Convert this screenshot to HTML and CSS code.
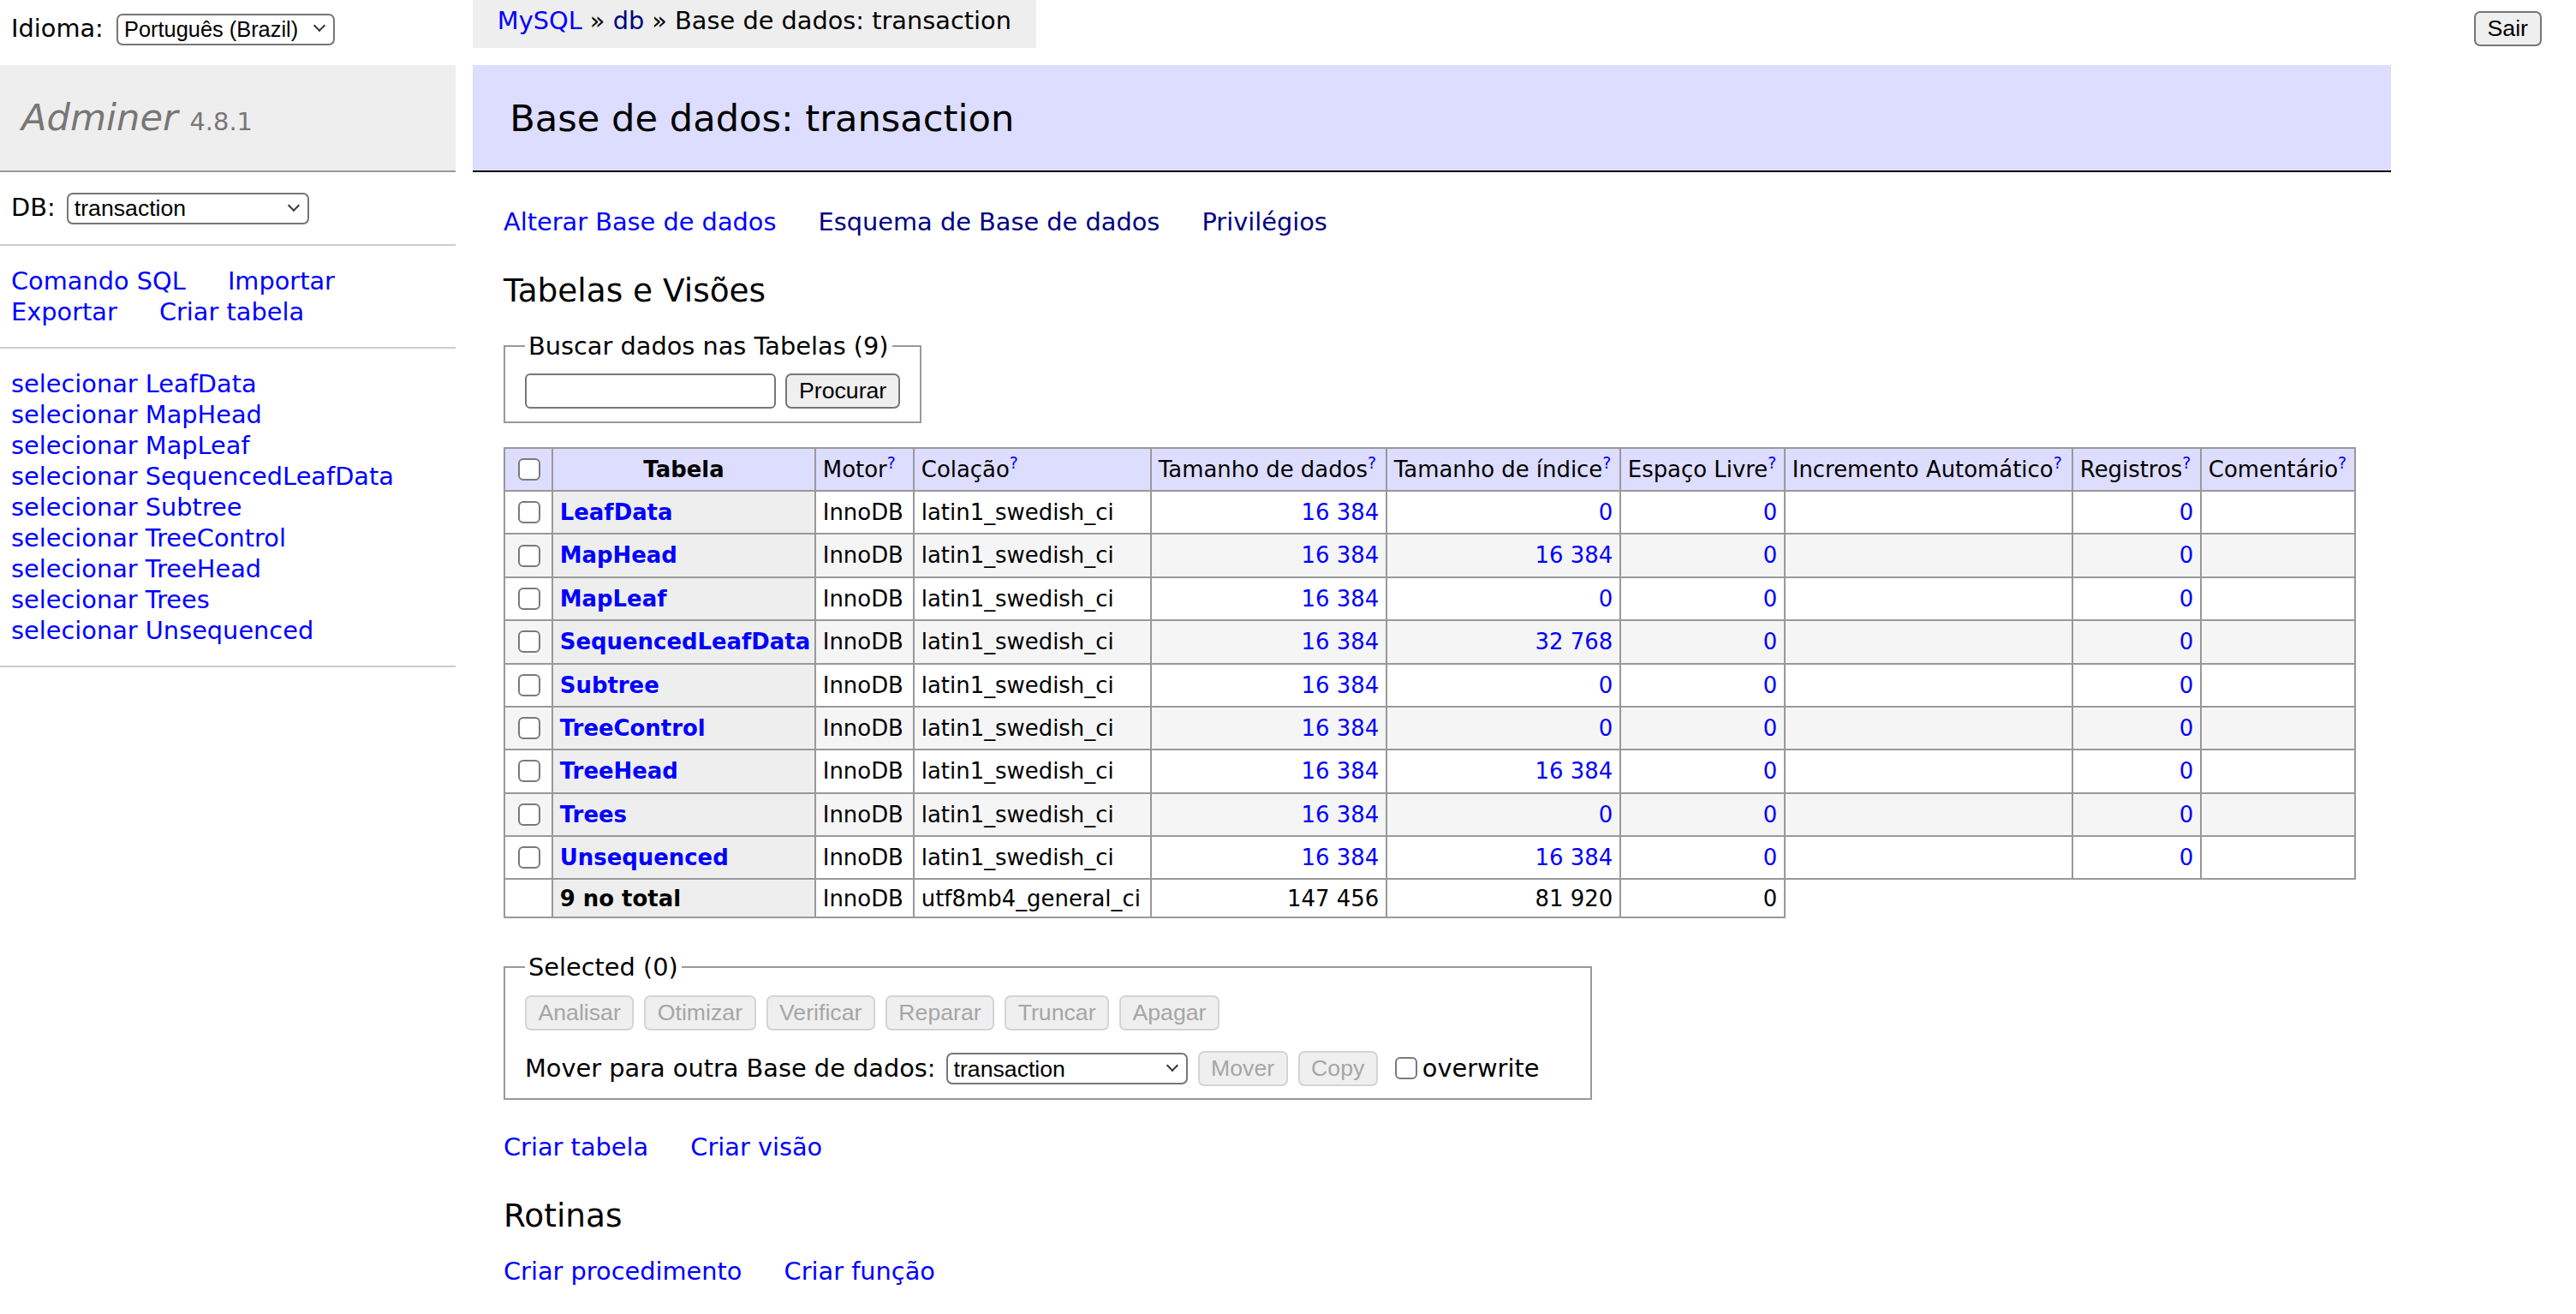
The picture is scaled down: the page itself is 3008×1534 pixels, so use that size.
FILE: index.html
```html
<!DOCTYPE html>
<html lang="pt-BR">
<head>
<meta charset="utf-8">
<title>Base de dados: transaction - Adminer</title>
<link rel="stylesheet" href="styles.css">
</head>
<body>
<header class="topbar">
  <form class="lang">Idioma: <span class="select-wrap"><select class="lang-select"><option>Português (Brazil)</option></select></span></form>
  <p class="breadcrumb"><a href="#">MySQL</a> » <a href="#" class="visited">db</a> » Base de dados: transaction</p>
  <form class="logout"><button type="button" class="btn">Sair</button></form>
</header>
<div class="layout">
  <nav class="menu">
    <h1 class="brand"><a href="#" class="brand-link">Adminer</a> <span class="version">4.8.1</span></h1>
    <form class="menu-block db-block">DB: <span class="select-wrap"><select class="db-select"><option>transaction</option></select></span></form>
    <p class="menu-block links"><a href="#">Comando SQL</a> <a href="#">Importar</a> <a href="#">Exportar</a> <a href="#">Criar tabela</a></p>
    <ul class="menu-block tables">
      <li><a href="#">selecionar</a> <a href="#">LeafData</a></li>
      <li><a href="#">selecionar</a> <a href="#">MapHead</a></li>
      <li><a href="#">selecionar</a> <a href="#">MapLeaf</a></li>
      <li><a href="#">selecionar</a> <a href="#">SequencedLeafData</a></li>
      <li><a href="#">selecionar</a> <a href="#">Subtree</a></li>
      <li><a href="#">selecionar</a> <a href="#">TreeControl</a></li>
      <li><a href="#">selecionar</a> <a href="#">TreeHead</a></li>
      <li><a href="#">selecionar</a> <a href="#">Trees</a></li>
      <li><a href="#">selecionar</a> <a href="#">Unsequenced</a></li>
    </ul>
  </nav>
  <main class="content">
    <h2 class="page-title">Base de dados: transaction</h2>
    <p class="links"><a href="#">Alterar Base de dados</a> <a href="#" class="visited">Esquema de Base de dados</a> <a href="#" class="visited">Privilégios</a></p>
    <h3 class="section-title">Tabelas e Visões</h3>
    <form class="db-form">
      <fieldset class="search">
        <legend>Buscar dados nas Tabelas (9)</legend>
        <div class="search-row"><input type="search" class="search-input"><button type="button" class="btn">Procurar</button></div>
      </fieldset>
      <table class="tables-list">
        <colgroup>
          <col class="c-check"><col class="c-name"><col class="c-engine"><col class="c-coll"><col class="c-data"><col class="c-index"><col class="c-free"><col class="c-auto"><col class="c-rows"><col class="c-comment">
        </colgroup>
        <thead>
          <tr>
            <td><input type="checkbox" class="check"></td>
            <th>Tabela</th>
            <td>Motor<a href="#" class="help">?</a></td>
            <td>Colação<a href="#" class="help">?</a></td>
            <td>Tamanho de dados<a href="#" class="help">?</a></td>
            <td>Tamanho de índice<a href="#" class="help">?</a></td>
            <td>Espaço Livre<a href="#" class="help">?</a></td>
            <td>Incremento Automático<a href="#" class="help">?</a></td>
            <td>Registros<a href="#" class="help">?</a></td>
            <td>Comentário<a href="#" class="help">?</a></td>
          </tr>
        </thead>
        <tbody>
          <tr><td><input type="checkbox" class="check"></td><th><a href="#" class="tname">LeafData</a></th><td>InnoDB</td><td>latin1_swedish_ci</td><td class="num"><a href="#">16 384</a></td><td class="num"><a href="#">0</a></td><td class="num"><a href="#">0</a></td><td></td><td class="num"><a href="#">0</a></td><td></td></tr>
          <tr><td><input type="checkbox" class="check"></td><th><a href="#" class="tname">MapHead</a></th><td>InnoDB</td><td>latin1_swedish_ci</td><td class="num"><a href="#">16 384</a></td><td class="num"><a href="#">16 384</a></td><td class="num"><a href="#">0</a></td><td></td><td class="num"><a href="#">0</a></td><td></td></tr>
          <tr><td><input type="checkbox" class="check"></td><th><a href="#" class="tname">MapLeaf</a></th><td>InnoDB</td><td>latin1_swedish_ci</td><td class="num"><a href="#">16 384</a></td><td class="num"><a href="#">0</a></td><td class="num"><a href="#">0</a></td><td></td><td class="num"><a href="#">0</a></td><td></td></tr>
          <tr><td><input type="checkbox" class="check"></td><th><a href="#" class="tname">SequencedLeafData</a></th><td>InnoDB</td><td>latin1_swedish_ci</td><td class="num"><a href="#">16 384</a></td><td class="num"><a href="#">32 768</a></td><td class="num"><a href="#">0</a></td><td></td><td class="num"><a href="#">0</a></td><td></td></tr>
          <tr><td><input type="checkbox" class="check"></td><th><a href="#" class="tname">Subtree</a></th><td>InnoDB</td><td>latin1_swedish_ci</td><td class="num"><a href="#">16 384</a></td><td class="num"><a href="#">0</a></td><td class="num"><a href="#">0</a></td><td></td><td class="num"><a href="#">0</a></td><td></td></tr>
          <tr><td><input type="checkbox" class="check"></td><th><a href="#" class="tname">TreeControl</a></th><td>InnoDB</td><td>latin1_swedish_ci</td><td class="num"><a href="#">16 384</a></td><td class="num"><a href="#">0</a></td><td class="num"><a href="#">0</a></td><td></td><td class="num"><a href="#">0</a></td><td></td></tr>
          <tr><td><input type="checkbox" class="check"></td><th><a href="#" class="tname">TreeHead</a></th><td>InnoDB</td><td>latin1_swedish_ci</td><td class="num"><a href="#">16 384</a></td><td class="num"><a href="#">16 384</a></td><td class="num"><a href="#">0</a></td><td></td><td class="num"><a href="#">0</a></td><td></td></tr>
          <tr><td><input type="checkbox" class="check"></td><th><a href="#" class="tname">Trees</a></th><td>InnoDB</td><td>latin1_swedish_ci</td><td class="num"><a href="#">16 384</a></td><td class="num"><a href="#">0</a></td><td class="num"><a href="#">0</a></td><td></td><td class="num"><a href="#">0</a></td><td></td></tr>
          <tr><td><input type="checkbox" class="check"></td><th><a href="#" class="tname">Unsequenced</a></th><td>InnoDB</td><td>latin1_swedish_ci</td><td class="num"><a href="#">16 384</a></td><td class="num"><a href="#">16 384</a></td><td class="num"><a href="#">0</a></td><td></td><td class="num"><a href="#">0</a></td><td></td></tr>
        </tbody>
        <tfoot>
          <tr><td></td><th>9 no total</th><td>InnoDB</td><td>utf8mb4_general_ci</td><td class="num">147 456</td><td class="num">81 920</td><td class="num">0</td></tr>
        </tfoot>
      </table>
      <fieldset class="selected">
        <legend>Selected (0)</legend>
        <div class="action-row">
          <button type="button" class="btn" disabled>Analisar</button>
          <button type="button" class="btn" disabled>Otimizar</button>
          <button type="button" class="btn" disabled>Verificar</button>
          <button type="button" class="btn" disabled>Reparar</button>
          <button type="button" class="btn" disabled>Truncar</button>
          <button type="button" class="btn" disabled>Apagar</button>
        </div>
        <div class="move-row">
          <span>Mover para outra Base de dados:</span>
          <span class="select-wrap"><select class="move-select"><option>transaction</option></select></span>
          <button type="button" class="btn" disabled>Mover</button>
          <button type="button" class="btn" disabled>Copy</button>
          <label class="overwrite"><input type="checkbox" class="check">overwrite</label>
        </div>
      </fieldset>
    </form>
    <p class="links after-form"><a href="#">Criar tabela</a> <a href="#">Criar visão</a></p>
    <h3 class="section-title">Rotinas</h3>
    <p class="links routines"><a href="#">Criar procedimento</a> <a href="#">Criar função</a></p>
  </main>
</div>
</body>
</html>
```
FILE: styles.css
```css
html {
  background: #fff;
}

body {
  margin: 0;
  color: #000;
  background: #fff;
  font-family: "DejaVu Sans", Verdana, sans-serif;
  font-size: 28.8px;
  line-height: 36px;
}

a {
  color: #00f;
  text-decoration: none;
}

a.visited {
  color: #000080;
}

/* ---------- top bar ---------- */
.topbar {
  display: flex;
  align-items: flex-start;
  height: 76px;
}

.lang {
  flex: none;
  width: 552px;
  box-sizing: border-box;
  margin: 0;
  padding: 7px 13px 0;
  line-height: 52px;
}

.lang .select-wrap {
  margin-left: 6px;
}

.breadcrumb {
  flex: none;
  margin: 0;
  height: 56px;
  padding: 0 28.8px;
  line-height: 48px;
  background: #eee;
  white-space: nowrap;
}

.logout {
  margin: 0 0 0 auto;
  padding: 13px 40px 0 0;
}

.logout .btn {
  padding: 0 14px;
}

/* ---------- form controls ---------- */
.select-wrap {
  position: relative;
  display: inline-block;
}

.select-wrap::after {
  content: "";
  position: absolute;
  right: 13px;
  top: 50%;
  width: 8px;
  height: 8px;
  margin-top: -8px;
  border-right: 2px solid #333;
  border-bottom: 2px solid #333;
  transform: rotate(45deg);
  pointer-events: none;
}

select {
  -webkit-appearance: none;
  appearance: none;
  box-sizing: border-box;
  height: 37px;
  margin: 0;
  padding: 0 30px 0 7px;
  border: 2px solid #767676;
  border-radius: 7px;
  background: #fff;
  color: #000;
  font-family: "Liberation Sans", Arial, sans-serif;
  font-size: 26.67px;
}

.lang-select {
  width: 255px;
  font-size: 25.4px;
}

.db-select {
  width: 283px;
}

.db-block {
  padding-top: 24px;
  padding-bottom: 25px;
}

.db-block .select-wrap {
  margin-left: 4px;
}

.move-select {
  width: 282px;
}

.btn {
  box-sizing: border-box;
  height: 41px;
  margin: 0;
  padding: 0 13.5px;
  border: 2px solid #767676;
  border-radius: 7px;
  background: #efefef;
  color: #000;
  font-family: "Liberation Sans", Arial, sans-serif;
  font-size: 26.67px;
  line-height: 37px;
}

.btn:disabled {
  border-color: #d4d4d4;
  background: #efefef;
  color: #a6a6a6;
}

.search-row .btn {
  padding: 0 14px;
}

.search-input {
  -webkit-appearance: none;
  appearance: none;
  box-sizing: border-box;
  width: 293px;
  height: 41px;
  margin: 0;
  padding: 0 6px;
  border: 2px solid #767676;
  border-radius: 6px;
  background: #fff;
  font-family: "Liberation Sans", Arial, sans-serif;
  font-size: 26.67px;
}

.check {
  -webkit-appearance: none;
  appearance: none;
  box-sizing: border-box;
  display: inline-block;
  width: 26px;
  height: 26px;
  margin: 6px 5px 6px 7px;
  border: 2px solid #7a7a7a;
  border-radius: 6px;
  background: #fff;
  vertical-align: middle;
}

/* ---------- layout ---------- */
.layout {
  display: flex;
  align-items: flex-start;
}

.menu {
  flex: none;
  width: 532px;
}

.content {
  flex: none;
  width: 2240px;
  box-sizing: border-box;
  margin-left: 20px;
  padding-left: 36px;
}

/* ---------- side menu ---------- */
.brand {
  margin: 0;
  padding: 34px 25px 35px;
  height: 54px;
  font-size: 43.2px;
  line-height: 54px;
  font-weight: normal;
  color: #777;
  background: #eee;
  border-bottom: 2px solid #999;
  white-space: nowrap;
}

.brand-link {
  color: #777;
  font-style: italic;
}

.version {
  color: #777;
  font-size: 28.9px;
  line-height: 1;
}

.menu-block {
  margin: 0;
  padding: 23px 13px;
  border-bottom: 2px solid #ccc;
}

.links a {
  margin-right: 40px;
  white-space: nowrap;
}

.tables {
  list-style: none;
  white-space: nowrap;
}

/* ---------- content ---------- */
.page-title {
  margin: 0 0 40px -36px;
  padding: 34.56px 43.2px;
  font-size: 43.2px;
  line-height: 54px;
  font-weight: normal;
  background: #ddf;
  border-bottom: 2px solid #000;
}

.content .links {
  margin: 0;
}

.section-title {
  margin: 39px 0 0;
  font-size: 37.44px;
  line-height: 46.8px;
  font-weight: normal;
}

.db-form {
  margin: 0;
}

fieldset {
  box-sizing: border-box;
  margin: 0;
  padding: 14.4px 23px;
  border: 2px solid #999;
}

legend {
  padding: 0 4px;
  line-height: 36px;
}

.search {
  width: fit-content;
  margin-top: 23px;
}

.search-row {
  display: flex;
  align-items: center;
  gap: 11px;
}

/* ---------- table ---------- */
.tables-list {
  margin-top: 28px;
  border-collapse: collapse;
  table-layout: fixed;
  width: 2161px;
  font-size: 25.92px;
  line-height: 32.4px;
}

.c-check { width: 56px; }
.c-name { width: 307px; }
.c-engine { width: 115px; }
.c-coll { width: 277px; }
.c-data { width: 275px; }
.c-index { width: 273px; }
.c-free { width: 192px; }
.c-auto { width: 336px; }
.c-rows { width: 150px; }
.c-comment { width: 180px; }

.tables-list td,
.tables-list th {
  border: 2px solid #999;
  padding: 5.2px 7.8px;
  white-space: nowrap;
  overflow: visible;
  text-align: left;
}

.tables-list thead td,
.tables-list thead th {
  background: #ddf;
  font-weight: normal;
}

.tables-list thead th {
  text-align: center;
  font-weight: bold;
}

.tables-list tbody tr:nth-child(even) td {
  background: #f5f5f5;
}

.tables-list tbody th,
.tables-list tfoot th {
  background: #eee;
  font-weight: bold;
}

.tables-list tfoot td {
  background: #fff;
}

.tables-list .num {
  text-align: right;
}

.tname {
  font-weight: bold;
}

.help {
  font-size: 19px;
  line-height: 0;
  vertical-align: 10px;
}

/* ---------- selected actions ---------- */
.selected {
  width: 1271px;
  margin-top: 39px;
}

.action-row {
  display: flex;
  gap: 12px;
}

.move-row {
  display: flex;
  align-items: center;
  gap: 12px;
  margin-top: 24.4px;
  white-space: nowrap;
}

.overwrite {
  display: flex;
  align-items: center;
}

.overwrite .check {
  margin: 0 6px 0 8px;
}

.content .after-form {
  margin-top: 37px;
}

.content .routines {
  margin-top: 23px;
}
```
